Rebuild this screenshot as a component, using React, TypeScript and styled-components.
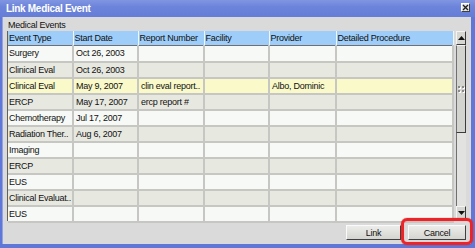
import React from 'react';
import styled, {createGlobalStyle} from "styled-components";

const GlobalStyle = createGlobalStyle`
    body {
        margin: 0;
        background: #dadada;
        font-family: "Liberation Sans", Arial, sans-serif;
    }
`

const columns = [
    {title: 'Event Type', width: 65},
    {title: 'Start Date', width: 65},
    {title: 'Report Number', width: 66},
    {title: 'Facility', width: 65},
    {title: 'Provider', width: 67},
    {title: 'Detailed Procedure', width: 117},
];

const rows = [
    ['Surgery', 'Oct 26, 2003', '', '', '', ''],
    ['Clinical Eval', 'Oct 26, 2003', '', '', '', ''],
    ['Clinical Eval', 'May 9, 2007', 'clin eval report..', '', 'Albo, Dominic', ''],
    ['ERCP', 'May 17, 2007', 'ercp report #', '', '', ''],
    ['Chemotherapy', 'Jul 17, 2007', '', '', '', ''],
    ['Radiation Ther..', 'Aug 6, 2007', '', '', '', ''],
    ['Imaging', '', '', '', '', ''],
    ['ERCP', '', '', '', '', ''],
    ['EUS', '', '', '', '', ''],
    ['Clinical Evaluat..', '', '', '', '', ''],
    ['EUS', '', '', '', '', ''],
];

const selectedRow = 2;

export default function App() {
    return (
        <>
            <GlobalStyle/>
            <Window>
                <TitleBar>
                    <Title>Link Medical Event</Title>
                    <CloseButton>
                        <svg width="7" height="7" viewBox="0 0 7 7">
                            <path d="M1 1 L6 6 M6 1 L1 6" stroke="#202020" strokeWidth="1.4"/>
                        </svg>
                    </CloseButton>
                </TitleBar>
                <Body>
                    <SectionLabel>Medical Events</SectionLabel>
                    <TableFrame>
                        <Grid>
                            <colgroup>
                                {columns.map(c => <col key={c.title} style={{width: c.width}}/>)}
                            </colgroup>
                            <thead>
                            <tr>
                                {columns.map(c => <HeadCell key={c.title}>{c.title}</HeadCell>)}
                            </tr>
                            </thead>
                            <tbody>
                            {rows.map((r, i) => (
                                <Row key={i} $tone={i === selectedRow ? 'selected' : i % 2 ? 'odd' : 'even'}>
                                    {r.map((v, j) => <Cell key={j}>{v}</Cell>)}
                                </Row>
                            ))}
                            </tbody>
                        </Grid>
                        <ScrollBar>
                            <ArrowButton>
                                <svg width="7" height="4" viewBox="0 0 7 4"><path d="M0 4 L3.5 0 L7 4 Z" fill="#111"/></svg>
                            </ArrowButton>
                            <Thumb>
                                <Grip>
                                    <span/><span/><span/><span/>
                                </Grip>
                            </Thumb>
                            <Track/>
                            <ArrowButton>
                                <svg width="7" height="4" viewBox="0 0 7 4"><path d="M0 0 L7 0 L3.5 4 Z" fill="#111"/></svg>
                            </ArrowButton>
                        </ScrollBar>
                    </TableFrame>
                    <ButtonRow>
                        <Button $width={55}>Link</Button>
                        <Highlighted>
                            <Button $width={58}>Cancel</Button>
                        </Highlighted>
                    </ButtonRow>
                </Body>
            </Window>
        </>
    );
}

const Window = styled.div`
    width: 475px;
    height: 248px;
    box-sizing: border-box;
    display: flex;
    flex-direction: column;
    background: #dadada;
    border-left: 2px solid #5f78d8;
    border-right: 4px solid #5f78d8;
    border-bottom: 4px solid #5f78d8;
    box-shadow: inset 1px 0 0 #8fa2e6;
`
const TitleBar = styled.div`
    height: 17px;
    margin-left: -2px;
    margin-right: -4px;
    padding: 0 5px 0 6px;
    display: flex;
    align-items: center;
    justify-content: space-between;
    background: linear-gradient(#8196e2, #6c84da 40%, #657dd6);
`
const Title = styled.span`
    color: #ffffff;
    font-weight: bold;
    font-size: 10px;
    letter-spacing: -0.3px;
`
const CloseButton = styled.div`
    width: 9px;
    height: 9px;
    box-sizing: border-box;
    margin-top: -3px;
    display: flex;
    align-items: center;
    justify-content: center;
    background: #e4e4e4;
    border: 1px solid;
    border-color: #ffffff #404040 #404040 #ffffff;
`
const Body = styled.div`
    flex: 1;
    display: flex;
    flex-direction: column;
    padding: 0 5px 0 5px;
    color: #111111;
    font-size: 9px;
    letter-spacing: -0.25px;
`
const SectionLabel = styled.div`
    height: 14px;
    line-height: 14px;
    padding-left: 1px;
    padding-top: 1px;
    box-sizing: border-box;
`
const TableFrame = styled.div`
    height: 190px;
    display: flex;
    border-left: 1px solid #606060;
`
const Grid = styled.table`
    width: 445px;
    table-layout: fixed;
    border-collapse: collapse;
    align-self: flex-start;
    font-size: 9px;
`
const HeadCell = styled.th`
    height: 14px;
    padding: 0 0 0 1px;
    text-align: left;
    font-weight: normal;
    background: #9dcdf8;
    border-right: 1px solid #eef6fd;
    border-left: 1px solid #7fa9d4;
    border-bottom: 1px solid #707070;
    white-space: nowrap;
    overflow: hidden;
    &:first-child { border-left: none; }
`
const Row = styled.tr<{ $tone: 'even' | 'odd' | 'selected' }>`
    height: 16px;
    background: ${p => p.$tone === 'selected' ? '#f9f9c9' : p.$tone === 'odd' ? '#e7e8e0' : '#f6f9f5'};
`
const Cell = styled.td`
    padding: 0 0 0 1px;
    border-right: 2px solid #c6c6c2;
    border-bottom: 2px solid #c6c6c2;
    white-space: nowrap;
    overflow: hidden;
    &:nth-child(n+2) { padding-left: 2px; }
`
const ScrollBar = styled.div`
    width: 11px;
    margin-left: 2px;
    height: 189px;
    display: flex;
    flex-direction: column;
`
const ArrowButton = styled.div`
    height: 14px;
    box-sizing: border-box;
    display: flex;
    align-items: center;
    justify-content: center;
    background: #d6d6d2;
    border: 1px solid;
    border-color: #f4f4f4 #3c3c3c #3c3c3c #f4f4f4;
`
const Thumb = styled.div`
    height: 88px;
    box-sizing: border-box;
    display: flex;
    align-items: center;
    justify-content: center;
    background: #d3d3cf;
    border: 1px solid;
    border-color: #f4f4f4 #3c3c3c #3c3c3c #707070;
`
const Grip = styled.div`
    display: grid;
    grid-template-columns: 2px 2px;
    gap: 2px;
    span {
        width: 2px;
        height: 2px;
        background: #8a8a8a;
        box-shadow: 1px 1px 0 #ffffff;
    }
`
const Track = styled.div`
    flex: 1;
    background: #e2e2e0;
    border-left: 1px solid #707070;
`
const ButtonRow = styled.div`
    display: flex;
    justify-content: flex-end;
    gap: 7px;
    margin-top: 4px;
`
const Button = styled.div<{ $width: number }>`
    width: ${p => p.$width}px;
    height: 15px;
    box-sizing: border-box;
    display: flex;
    align-items: center;
    justify-content: center;
    color: #111111;
    background: linear-gradient(#ececea, #d4d4d0);
    border: 1px solid;
    border-color: #fafafa #404040 #404040 #fafafa;
`
const Highlighted = styled.div`
    position: relative;
    &::after {
        content: '';
        position: absolute;
        left: -7px;
        right: -7px;
        top: -7px;
        bottom: -5px;
        border: 3px solid #ec2428;
        border-radius: 6px;
        box-shadow: 0 0 1px #a01010, inset 0 0 1px #ff8080;
    }
`
